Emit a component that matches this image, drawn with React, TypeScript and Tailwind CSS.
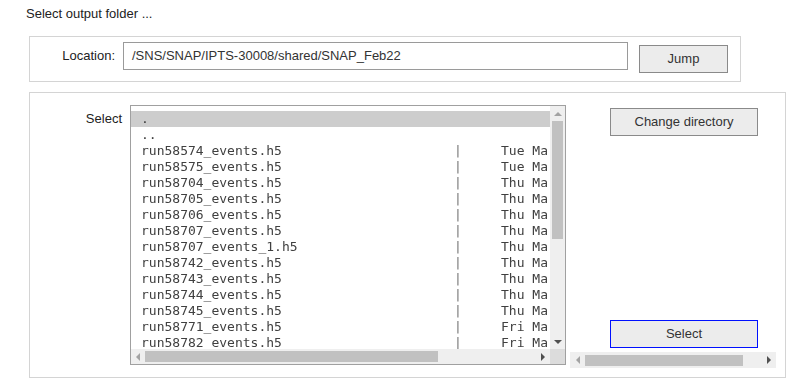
import React from "react"

const files: [string, string][] = [
    ["run58574_events.h5", "Tue Mar"],
    ["run58575_events.h5", "Tue Mar"],
    ["run58704_events.h5", "Thu Mar"],
    ["run58705_events.h5", "Thu Mar"],
    ["run58706_events.h5", "Thu Mar"],
    ["run58707_events.h5", "Thu Mar"],
    ["run58707_events_1.h5", "Thu Mar"],
    ["run58742_events.h5", "Thu Mar"],
    ["run58743_events.h5", "Thu Mar"],
    ["run58744_events.h5", "Thu Mar"],
    ["run58745_events.h5", "Thu Mar"],
    ["run58771_events.h5", "Fri Mar"],
    ["run58782_events.h5", "Fri Mar"],
]

function Arrow({ dir, dark }: { dir: "up" | "down" | "left" | "right"; dark?: boolean }) {
    const pts = {
        up: "0,4 4,0 8,4",
        down: "0,0 8,0 4,4",
        left: "4,0 4,8 0,4",
        right: "0,0 0,8 4,4",
    }[dir]
    const vertical = dir === "up" || dir === "down"
    return (
        <svg width={vertical ? 8 : 4} height={vertical ? 4 : 8} viewBox={vertical ? "0 0 8 4" : "0 0 4 8"}>
            <polygon points={pts} fill={dark ? "#505050" : "#a3a3a3"} />
        </svg>
    )
}

export default function App() {
    return (
        <div className="w-[801px] h-[389px] bg-white overflow-hidden font-['Liberation_Sans',Arial,sans-serif] text-[13px] text-[#222]">
            <div className="pl-[26px] pt-[6px] leading-[16px]">Select output folder ...</div>

            {/* Location row */}
            <div className="ml-[29px] mt-[14px] w-[712px] h-[46px] border border-[#d4d4d4] flex items-start">
                <div className="w-[85px] mt-[11px] text-right leading-[16px]">Location:</div>
                <div className="ml-[8px] mt-[5px] w-[505px] h-[28px] border border-[#9a9a9a] flex items-center pl-[8px] text-[#333]">
                    /SNS/SNAP/IPTS-30008/shared/SNAP_Feb22
                </div>
                <button className="ml-[11px] mt-[8px] w-[89px] h-[28px] border border-[#8a8a8a] bg-[#ececec] text-[#333]">
                    Jump
                </button>
            </div>

            {/* Select panel */}
            <div className="ml-[29px] mt-[10px] w-[757px] h-[286px] border border-[#d4d4d4] flex items-stretch">
                <div className="w-[92px] mt-[18px] text-right leading-[16px]">Select</div>

                <div className="ml-[8px] mt-[12px] w-[436px] h-[260px] border border-[#a0a0a0] grid grid-cols-[1fr_15px] grid-rows-[1fr_15px]">
                    <div className="overflow-hidden pt-[5px] will-change-transform font-['DejaVu_Sans_Mono',monospace] text-[13px] leading-[16px] text-[#404040] whitespace-pre">
                        <div className="h-[16px] bg-[#cdcdcd] pl-[10px]">.</div>
                        <div className="h-[16px] pl-[10px]">..</div>
                        {files.map(([n, d]) => (
                            <div key={n} className="h-[16px] pl-[10px]">
                                {n.padEnd(40, " ")}
                                <span className="text-[#777]">|</span>
                                {"     " + d}
                            </div>
                        ))}
                    </div>

                    {/* vertical scrollbar */}
                    <div className="bg-[#efefef] flex flex-col items-center">
                        <div className="h-[15px] flex items-center justify-center"><Arrow dir="up" /></div>
                        <div className="w-[11px] h-[118px] bg-[#c1c1c1]" />
                        <div className="flex-1" />
                        <div className="h-[15px] flex items-center justify-center"><Arrow dir="down" dark /></div>
                    </div>

                    {/* horizontal scrollbar */}
                    <div className="bg-[#efefef] flex items-center">
                        <div className="w-[14px] flex justify-center"><Arrow dir="left" /></div>
                        <div className="w-[293px] h-[11px] bg-[#c1c1c1]" />
                        <div className="flex-1" />
                        <div className="w-[15px] flex justify-center"><Arrow dir="right" dark /></div>
                    </div>
                    <div className="bg-[#dcdcdc]" />
                </div>

                {/* right column */}
                <div className="ml-[4px] w-[206px] flex flex-col pb-[9px]">
                    <button className="ml-[40px] mt-[15px] w-[148px] h-[28px] border border-[#8a8a8a] bg-[#ececec] text-[#333]">
                        Change directory
                    </button>
                    <div className="flex-1" />
                    <button className="ml-[40px] w-[148px] h-[28px] border border-[#0010ff] bg-[#ececec] text-[#333]">
                        Select
                    </button>
                    <div className="mt-[4px] h-[16px] bg-[#efefef] flex items-center">
                        <div className="w-[15px] flex justify-center"><Arrow dir="left" /></div>
                        <div className="w-[158px] h-[11px] bg-[#c1c1c1]" />
                        <div className="flex-1" />
                        <div className="w-[15px] flex justify-center"><Arrow dir="right" dark /></div>
                    </div>
                </div>
            </div>
        </div>
    )
}
